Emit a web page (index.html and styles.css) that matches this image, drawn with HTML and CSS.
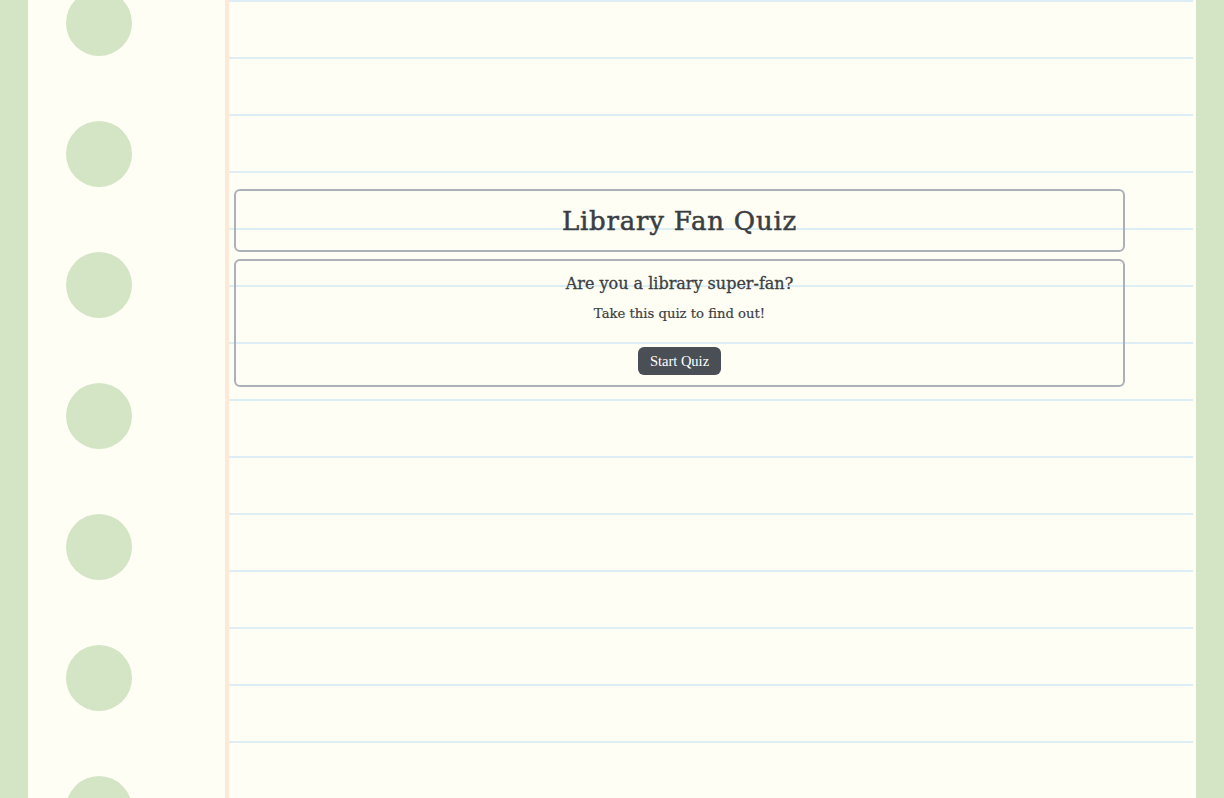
FILE: index.html
```html
<!DOCTYPE html>
<html lang="en">
<head>
<meta charset="utf-8">
<title>Library Fan Quiz</title>
<link rel="stylesheet" href="styles.css">
</head>
<body>
<div class="page">
  <div class="strip"></div>
  <div class="margin">
    <div class="holes">
      <span class="hole"></span>
      <span class="hole"></span>
      <span class="hole"></span>
      <span class="hole"></span>
      <span class="hole"></span>
      <span class="hole"></span>
      <span class="hole"></span>
    </div>
  </div>
  <div class="rule"></div>
  <main class="paper">
    <div class="content">
      <header class="card title-card">
        <h1 class="title">Library Fan Quiz</h1>
      </header>
      <section class="card intro-card">
        <h2 class="question">Are you a library super-fan?</h2>
        <p class="lead">Take this quiz to find out!</p>
        <button class="start" type="button">Start Quiz</button>
      </section>
    </div>
  </main>
  <div class="gap"></div>
  <div class="strip strip-right"></div>
</div>
</body>
</html>
```

FILE: styles.css
```css
html, body {
  margin: 0;
  padding: 0;
  height: 100%;
}

body {
  background: #fefef4;
  font-family: "DejaVu Serif", "Liberation Serif", serif;
  color: #3b3e43;
  overflow: hidden;
}

.page {
  display: flex;
  height: 798px;
}

.strip {
  width: 28px;
  flex: 0 0 28px;
  background: #d3e5c5;
}

.strip-right {
  width: 28px;
  flex: 0 0 28px;
}

.margin {
  flex: 0 0 197px;
  background: #fefef4;
  overflow: hidden;
}

.holes {
  display: flex;
  flex-direction: column;
  gap: 65px;
  margin-top: -10px;
  padding-left: 38px;
}

.hole {
  display: block;
  width: 66px;
  height: 66px;
  border-radius: 50%;
  background: #d3e5c5;
  flex: 0 0 66px;
}

.rule {
  flex: 0 0 4px;
  background: #fde9d6;
}

.paper {
  flex: 1 1 auto;
  background-color: #fefef4;
  background-image: repeating-linear-gradient(
    to bottom,
    #ddeff5 0px,
    #ddeff5 2px,
    transparent 2px,
    transparent 57px
  );
}

.gap {
  flex: 0 0 3px;
  background: #fefef4;
}

.content {
  display: flex;
  flex-direction: column;
  gap: 7px;
  padding: 189px 68px 0 5px;
}

.card {
  border: 2px solid #abb1b6;
  border-radius: 6px;
  text-align: center;
}

.title-card {
  height: 59px;
  display: flex;
  align-items: center;
  justify-content: center;
}

.title {
  margin: 0;
  font-size: 26px;
  font-weight: 400;
  color: #3a3d42;
  letter-spacing: 0.8px;
  -webkit-text-stroke: 0.5px #3a3d42;
}

.intro-card {
  padding: 11px 0 10px;
  display: flex;
  flex-direction: column;
  align-items: center;
}

.question {
  margin: 0;
  font-size: 16px;
  font-weight: 400;
  line-height: 24px;
  -webkit-text-stroke: 0.3px #3b3e43;
}

.lead {
  margin: 8px 0 0;
  font-size: 13.2px;
  line-height: 20px;
  -webkit-text-stroke: 0.2px #3b3e43;
}

.start {
  margin-top: 23px;
  height: 28px;
  width: 83px;
  border: none;
  border-radius: 6px;
  background: #4a4f56;
  color: #ffffff;
  font-family: "Liberation Serif", serif;
  font-size: 14.5px;
  padding: 0;
}
```
